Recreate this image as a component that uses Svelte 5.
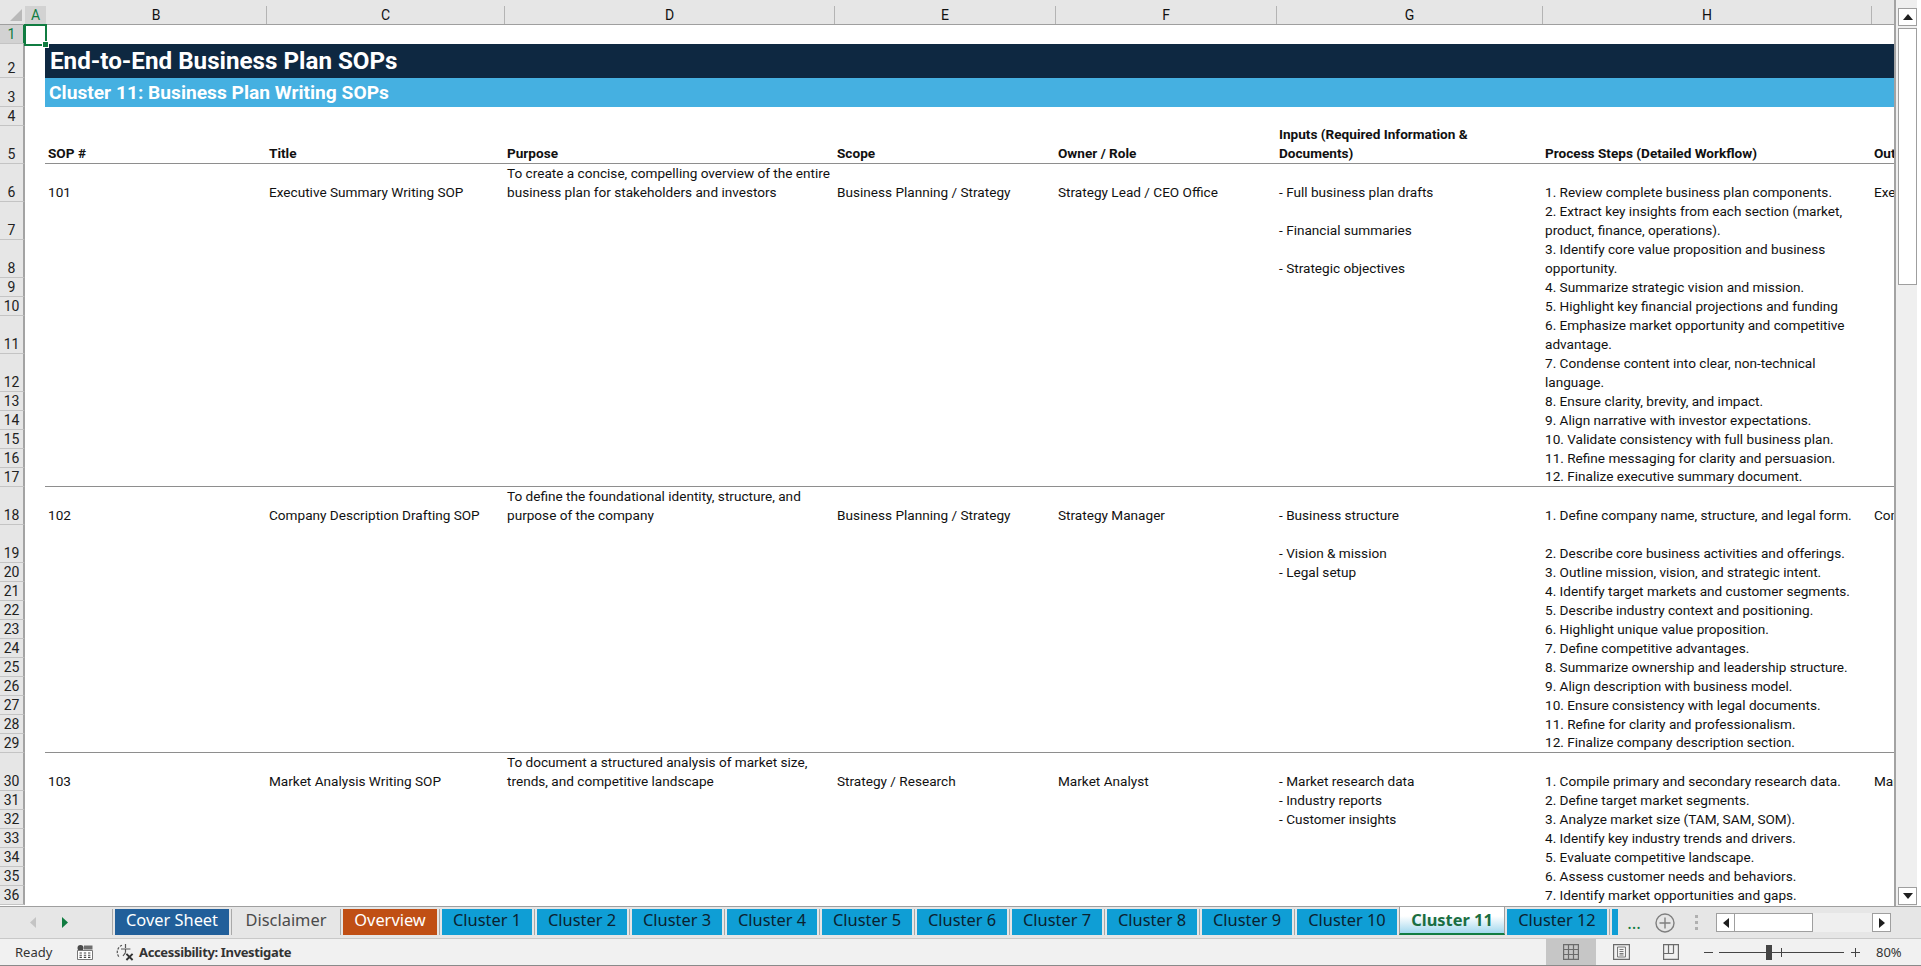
<script>
  const cols = ['B', 'C', 'D', 'E', 'F', 'G', 'H'];

  // b..i = sheet columns, lines in a cell are split with \n like the wrapped text
  const rows = [
    { n: 1, h: 19, selected: true },
    { n: 2, h: 34, kind: 'title', text: 'End-to-End Business Plan SOPs' },
    { n: 3, h: 29, kind: 'subtitle', text: 'Cluster 11: Business Plan Writing SOPs' },
    { n: 4, h: 19 },
    { n: 5, h: 38, kind: 'head', rule: true, c: ['SOP #', 'Title', 'Purpose', 'Scope', 'Owner / Role', 'Inputs (Required Information &\nDocuments)', 'Process Steps (Detailed Workflow)', 'Outputs'] },
    { n: 6, h: 38, c: ['101', 'Executive Summary Writing SOP', 'To create a concise, compelling overview of the entire\nbusiness plan for stakeholders and investors', 'Business Planning / Strategy', 'Strategy Lead / CEO Office', '- Full business plan drafts', '1. Review complete business plan components.', 'Executive'] },
    { n: 7, h: 38, c: ['', '', '', '', '', '- Financial summaries', '2. Extract key insights from each section (market,\nproduct, finance, operations).'] },
    { n: 8, h: 38, c: ['', '', '', '', '', '- Strategic objectives', '3. Identify core value proposition and business\nopportunity.'] },
    { n: 9, h: 19, c: ['', '', '', '', '', '', '4. Summarize strategic vision and mission.'] },
    { n: 10, h: 19, c: ['', '', '', '', '', '', '5. Highlight key financial projections and funding'] },
    { n: 11, h: 38, c: ['', '', '', '', '', '', '6. Emphasize market opportunity and competitive\nadvantage.'] },
    { n: 12, h: 38, c: ['', '', '', '', '', '', '7. Condense content into clear, non-technical\nlanguage.'] },
    { n: 13, h: 19, c: ['', '', '', '', '', '', '8. Ensure clarity, brevity, and impact.'] },
    { n: 14, h: 19, c: ['', '', '', '', '', '', '9. Align narrative with investor expectations.'] },
    { n: 15, h: 19, c: ['', '', '', '', '', '', '10. Validate consistency with full business plan.'] },
    { n: 16, h: 19, c: ['', '', '', '', '', '', '11. Refine messaging for clarity and persuasion.'] },
    { n: 17, h: 19, rule: true, c: ['', '', '', '', '', '', '12. Finalize executive summary document.'] },
    { n: 18, h: 38, c: ['102', 'Company Description Drafting SOP', 'To define the foundational identity, structure, and\npurpose of the company', 'Business Planning / Strategy', 'Strategy Manager', '- Business structure', '1. Define company name, structure, and legal form.', 'Company'] },
    { n: 19, h: 38, c: ['', '', '', '', '', '- Vision & mission', '2. Describe core business activities and offerings.'] },
    { n: 20, h: 19, c: ['', '', '', '', '', '- Legal setup', '3. Outline mission, vision, and strategic intent.'] },
    { n: 21, h: 19, c: ['', '', '', '', '', '', '4. Identify target markets and customer segments.'] },
    { n: 22, h: 19, c: ['', '', '', '', '', '', '5. Describe industry context and positioning.'] },
    { n: 23, h: 19, c: ['', '', '', '', '', '', '6. Highlight unique value proposition.'] },
    { n: 24, h: 19, c: ['', '', '', '', '', '', '7. Define competitive advantages.'] },
    { n: 25, h: 19, c: ['', '', '', '', '', '', '8. Summarize ownership and leadership structure.'] },
    { n: 26, h: 19, c: ['', '', '', '', '', '', '9. Align description with business model.'] },
    { n: 27, h: 19, c: ['', '', '', '', '', '', '10. Ensure consistency with legal documents.'] },
    { n: 28, h: 19, c: ['', '', '', '', '', '', '11. Refine for clarity and professionalism.'] },
    { n: 29, h: 19, rule: true, c: ['', '', '', '', '', '', '12. Finalize company description section.'] },
    { n: 30, h: 38, c: ['103', 'Market Analysis Writing SOP', 'To document a structured analysis of market size,\ntrends, and competitive landscape', 'Strategy / Research', 'Market Analyst', '- Market research data', '1. Compile primary and secondary research data.', 'Market'] },
    { n: 31, h: 19, c: ['', '', '', '', '', '- Industry reports', '2. Define target market segments.'] },
    { n: 32, h: 19, c: ['', '', '', '', '', '- Customer insights', '3. Analyze market size (TAM, SAM, SOM).'] },
    { n: 33, h: 19, c: ['', '', '', '', '', '', '4. Identify key industry trends and drivers.'] },
    { n: 34, h: 19, c: ['', '', '', '', '', '', '5. Evaluate competitive landscape.'] },
    { n: 35, h: 19, c: ['', '', '', '', '', '', '6. Assess customer needs and behaviors.'] },
    { n: 36, h: 19, c: ['', '', '', '', '', '', '7. Identify market opportunities and gaps.'] }
  ];

  const tabs = [
    { name: 'Cover Sheet', w: 114, tone: 'navy' },
    { name: 'Disclaimer', w: 104, tone: 'plain' },
    { name: 'Overview', w: 94, tone: 'orange' },
    { name: 'Cluster 1', w: 90 },
    { name: 'Cluster 2', w: 90 },
    { name: 'Cluster 3', w: 90 },
    { name: 'Cluster 4', w: 90 },
    { name: 'Cluster 5', w: 90 },
    { name: 'Cluster 6', w: 90 },
    { name: 'Cluster 7', w: 90 },
    { name: 'Cluster 8', w: 90 },
    { name: 'Cluster 9', w: 90 },
    { name: 'Cluster 10', w: 100 },
    { name: 'Cluster 11', w: 106, tone: 'active' },
    { name: 'Cluster 12', w: 100 },
    { name: '', w: 6 }
  ];
</script>

<div class="excel">
  <div class="work">
    <div class="sheet">
      <div class="col-heads">
        <div class="corner"><span class="tri"></span></div>
        <div class="col-a">A</div>
        {#each cols as c}
          <div class="col-head">{c}</div>
        {/each}
        <div class="col-head last"></div>
      </div>

      {#each rows as r}
        <div class="row" style:height="{r.h}px">
          <div class="row-head" class:sel={r.selected}>{r.n}</div>
          {#if r.kind === 'title' || r.kind === 'subtitle'}
            <div class="banner {r.kind}">{r.text}</div>
          {:else}
            <div class="cells" class:rule={r.rule} class:head={r.kind === 'head'}>
              {#each r.c ?? [] as text}
                <div class="cell">{text}</div>
              {/each}
            </div>
          {/if}
        </div>
      {/each}

      <div class="cursor"><span class="handle"></span></div>
    </div>

    <div class="vscroll">
      <div class="sb-btn"><svg width="10" height="6" viewBox="0 0 10 6"><path d="M5 0 10 6H0z" fill="#1f1f1f"/></svg></div>
      <div class="sb-track"><div class="sb-thumb"></div></div>
      <div class="sb-btn"><svg width="10" height="6" viewBox="0 0 10 6"><path d="M0 0H10L5 6z" fill="#1f1f1f"/></svg></div>
    </div>
  </div>

  <div class="tabbar">
    <div class="tab-nav">
      <svg width="6" height="11" viewBox="0 0 6 11"><path d="M6 0V11L0 5.5z" fill="#c4c4c4"/></svg>
      <svg width="6" height="11" viewBox="0 0 6 11"><path d="M0 0V11L6 5.5z" fill="#107c41"/></svg>
    </div>
    <div class="tabs">
      {#each tabs as t}
        <div class="tab {t.tone ?? 'blue'}" style:width="{t.w}px">{t.name}</div>
      {/each}
    </div>
    <div class="more">...</div>
    <div class="add">
      <svg width="20" height="20" viewBox="0 0 20 20" fill="none" stroke="#7f7f7f"><circle cx="10" cy="10" r="9" stroke-width="1.4"/><path d="M10 4.5v11M4.5 10h11" stroke-width="1.4"/></svg>
    </div>
    <div class="grip"><i></i><i></i><i></i></div>
    <div class="hscroll">
      <div class="hs-btn"><svg width="6" height="10" viewBox="0 0 6 10"><path d="M6 0V10L0 5z" fill="#1f1f1f"/></svg></div>
      <div class="hs-thumb"></div>
      <div class="hs-track"></div>
      <div class="hs-btn"><svg width="6" height="10" viewBox="0 0 6 10"><path d="M0 0V10L6 5z" fill="#1f1f1f"/></svg></div>
    </div>
  </div>

  <div class="status">
    <span class="ready">Ready</span>
    <svg class="macro" width="16" height="15" viewBox="0 0 16 15">
      <circle cx="3.5" cy="3" r="3" fill="#4a4a4a"/>
      <path d="M7 0.5h8.5v4H7z" fill="#6e6e6e"/>
      <path d="M.5 5.5h15v9H.5z" fill="#fff" stroke="#777"/>
      <path d="M2.5 8h2.4M6.8 8h2.4M11 8h2.4M2.5 10.2h2.4M6.8 10.2h2.4M11 10.2h2.4M2.5 12.4h2.4M6.8 12.4h2.4M11 12.4h2.4" stroke="#444" stroke-width="1.1"/>
    </svg>
    <svg class="access" width="19" height="18" viewBox="0 0 19 18" fill="none" stroke="#555" stroke-width="1.2">
      <path d="M6 2.2A7.5 7.5 0 0 0 3.6 14.6" stroke-dasharray="2.4 1.3"/>
      <path d="M9.5 1v4M5 6h9.4M9.5 6v3.6M9.5 9.6 7 13"/>
      <path d="M10.4 10.8l6.2 6.2M16.6 10.8l-6.2 6.2" stroke="#333" stroke-width="1.9"/>
    </svg>
    <span class="access-label">Accessibility: Investigate</span>

    <div class="views">
      <div class="view on">
        <svg width="16" height="16" viewBox="0 0 16 16" fill="none" stroke="#6b6b6b" stroke-width="1.2"><path d="M.6.6h14.8v14.8H.6zM5.5.6v14.8M10.5.6v14.8M.6 5.5h14.8M.6 10.5h14.8"/></svg>
      </div>
      <div class="view">
        <svg width="17" height="16" viewBox="0 0 17 16" fill="none" stroke="#6b6b6b"><path d="M.6.6h15.8v14.8H.6z" stroke-width="1.2"/><path d="M4.5 3h8v10h-8zM6.5 5.5h4M6.5 7.5h4M6.5 9.5h4M6.5 11h4" stroke-width=".9"/></svg>
      </div>
      <div class="view">
        <svg width="16" height="16" viewBox="0 0 16 16" fill="none" stroke="#6b6b6b" stroke-width="1.2"><path d="M.6.6h14.8v14.8H.6zM5.5.6v8.9M10.5.6v8.9M.6 9.5h9.9"/></svg>
      </div>
    </div>

    <div class="zoom">
      <span class="minus"></span>
      <div class="slider"><span class="tick"></span><span class="knob"></span></div>
      <span class="plus"></span>
      <span class="pct">80%</span>
    </div>
  </div>
</div>

<style>
  :global(body) {
    margin: 0;
    background: #fff;
  }

  .excel {
    width: 1921px;
    height: 966px;
    display: flex;
    flex-direction: column;
    overflow: hidden;
    font-family: Roboto, "Liberation Sans", sans-serif;
    color: #111;
  }

  .work {
    display: flex;
    height: 907px;
    background: linear-gradient(90deg, #efefef 1917px, #fff 1917px);
    border-bottom: 1px solid #9f9f9f;
    box-sizing: border-box;
  }

  .sheet {
    position: relative;
    width: 1896px;
    height: 906px;
    overflow: hidden;
    background: #fff;
    border-right: 2px solid #a3a3a3;
    box-sizing: border-box;
    font-size: 13.6px;
    line-height: 19px;
  }

  .col-heads {
    display: grid;
    grid-template-columns: 25px 21px 221px 238px 330px 221px 221px 266px 329px 1fr;
    height: 25px;
    background: #e6e6e6;
    border-bottom: 1px solid #9f9f9f;
    box-sizing: border-box;
    font-size: 14px;
  }

  .corner {
    position: relative;
  }

  .tri {
    position: absolute;
    right: 3px;
    bottom: 3px;
    width: 0;
    height: 0;
    border-left: 12px solid transparent;
    border-bottom: 12px solid #b9b9b9;
  }

  .col-a {
    margin-top: 6px;
    background: #d2d2d2;
    color: #107c41;
    text-align: center;
    line-height: 18px;
  }

  .col-head {
    margin-top: 6px;
    text-align: center;
    line-height: 18px;
    border-right: 1px solid #b4b4b4;
  }

  .col-head.last {
    border-right: none;
  }

  .row {
    display: flex;
  }

  .row-head {
    flex: 0 0 25px;
    box-sizing: border-box;
    background: #e6e6e6;
    border-right: 2px solid #a3a3a3;
    border-bottom: 1px solid #c4c4c4;
    text-align: center;
    display: flex;
    align-items: flex-end;
    justify-content: center;
    font-size: 14px;
    line-height: 17px;
    color: #222;
  }

  .row-head.sel {
    background: #d2d2d2;
    color: #107c41;
    border-right-color: #107c41;
  }

  .banner {
    margin-left: 20px;
    flex: 1;
    color: #fff;
    font-weight: 700;
    display: flex;
    align-items: center;
    white-space: nowrap;
  }

  .title {
    background: #0e2841;
    font-size: 24.2px;
    padding: 1px 0 0 5px;
  }

  .subtitle {
    background: #45b0e1;
    font-size: 19.2px;
    padding: 0 0 0 4px;
  }

  .cells {
    margin-left: 20px;
    flex: 1;
    display: grid;
    grid-template-columns: 221px 238px 330px 221px 221px 266px 329px 1fr;
    box-sizing: border-box;
    min-width: 0;
  }

  .cells.rule {
    border-bottom: 1px solid #8e8e8e;
  }

  .cells.head {
    font-weight: 700;
  }

  .cell {
    align-self: end;
    padding-left: 3px;
    white-space: pre;
    overflow: hidden;
  }

  .cursor {
    position: absolute;
    left: 24px;
    top: 24px;
    width: 23px;
    height: 22px;
    box-sizing: border-box;
    border: 2px solid #107c41;
  }

  .handle {
    position: absolute;
    right: -4px;
    bottom: -4px;
    width: 5px;
    height: 5px;
    background: #107c41;
    border: 1px solid #fff;
  }

  .vscroll {
    width: 19px;
    margin-left: 2px;
    padding-top: 8px;
    height: 897px;
    display: flex;
    flex-direction: column;
    gap: 2px;
  }

  .sb-btn {
    flex: 0 0 18px;
    box-sizing: border-box;
    background: #fff;
    border: 1px solid #9f9f9f;
    display: flex;
    align-items: center;
    justify-content: center;
  }

  .sb-track {
    flex: 1;
  }

  .sb-thumb {
    height: 257px;
    box-sizing: border-box;
    background: #fff;
    border: 1px solid #9f9f9f;
  }

  .tabbar {
    height: 32px;
    display: flex;
    align-items: center;
    background: #e6e6e6;
    border-bottom: 1px solid #c8c8c8;
    box-sizing: border-box;
  }

  .tab-nav {
    width: 112px;
    box-sizing: border-box;
    padding-left: 30px;
    display: flex;
    gap: 26px;
    align-items: center;
  }

  .tabs {
    display: flex;
    gap: 5px;
    height: 26px;
    margin-left: 3px;
    width: 1503px;
    flex: none;
    align-self: flex-start;
    margin-top: 2px;
  }

  .tab {
    position: relative;
    box-sizing: border-box;
    text-align: center;
    line-height: 22px;
    font-family: "Noto Sans", "Open Sans", sans-serif;
    font-size: 16.4px;
    color: #0b2230;
    flex: none;
  }

  .tab::before {
    content: '';
    position: absolute;
    left: -3px;
    top: 0;
    bottom: 0;
    border-left: 1px solid #a9a9a9;
  }

  .tab.navy {
    background: #215f9a;
    color: #fff;
  }

  .tab.plain {
    color: #4a4a4a;
  }

  .tab.orange {
    background: #c04f15;
    color: #fff;
  }

  .tab.blue {
    background: #0f9ed5;
  }

  .tab.active {
    height: 28px;
    margin: -2px -3px 0;
    padding-top: 2px;
    background: linear-gradient(#fff 35%, #a3d8ee);
    border: solid #9f9f9f;
    border-width: 0 1px;
    border-bottom: 2px solid #107c41;
    color: #1a6e41;
    font-weight: 700;
  }

  .tab.active::before,
  .tab.active + .tab::before {
    display: none;
  }

  .more {
    width: 30px;
    margin-left: 1px;
    color: #107c41;
    font-size: 17px;
    text-align: center;
    font-family: "Noto Sans", sans-serif;
    line-height: 20px;
  }

  .add {
    width: 20px;
    height: 20px;
    margin-left: 6px;
    display: flex;
  }

  .grip {
    width: 4px;
    margin-left: 20px;
    display: flex;
    flex-direction: column;
    gap: 3px;
  }

  .grip i {
    display: block;
    width: 3px;
    height: 3px;
    background: #b0b0b0;
  }

  .hscroll {
    margin-left: 17px;
    display: flex;
    height: 19px;
    width: 175px;
    background: #efefef;
  }

  .hs-btn {
    flex: 0 0 19px;
    box-sizing: border-box;
    background: #fff;
    border: 1px solid #9f9f9f;
    display: flex;
    align-items: center;
    justify-content: center;
  }

  .hs-thumb {
    flex: 0 0 79px;
    background: #fff;
    box-sizing: border-box;
    border: 1px solid #9f9f9f;
    margin-left: -1px;
  }

  .hs-track {
    flex: 1;
  }

  .status {
    flex: 1;
    display: flex;
    align-items: center;
    background: #f1f1f1;
    border-bottom: 1px solid #8a8a8a;
    box-sizing: border-box;
    font-family: "Noto Sans", "Open Sans", sans-serif;
    font-size: 13px;
    color: #333;
  }

  .ready {
    margin-left: 15px;
    width: 62px;
  }

  .access {
    margin-left: 23px;
  }

  .access-label {
    margin-left: 4px;
    font-weight: 700;
    letter-spacing: -0.35px;
  }

  .views {
    margin-left: auto;
    display: flex;
    align-self: stretch;
  }

  .view {
    width: 50px;
    display: flex;
    align-items: center;
    justify-content: center;
  }

  .view.on {
    background: #c6c6c6;
  }

  .zoom {
    width: 225px;
    box-sizing: border-box;
    padding-left: 8px;
    display: flex;
    align-items: center;
  }

  .minus,
  .plus {
    position: relative;
    width: 9px;
    height: 1px;
    background: #444;
  }

  .plus::after {
    content: '';
    position: absolute;
    left: 4px;
    top: -4px;
    width: 1px;
    height: 9px;
    background: #444;
  }

  .slider {
    position: relative;
    margin-left: 6px;
    width: 125px;
    height: 1px;
    background: #444;
  }

  .tick {
    position: absolute;
    left: 62px;
    top: -4px;
    width: 1px;
    height: 9px;
    background: #444;
  }

  .knob {
    position: absolute;
    left: 47px;
    top: -7px;
    width: 6px;
    height: 15px;
    background: #444;
  }

  .plus {
    margin-left: 7px;
  }

  .pct {
    margin-left: 16px;
    font-size: 13px;
  }
</style>
